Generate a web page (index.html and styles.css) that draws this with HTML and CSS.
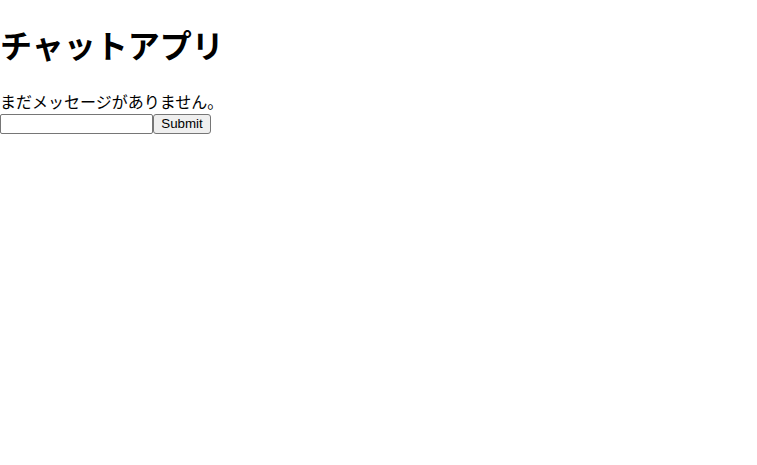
FILE: index.html
```html
<!DOCTYPE html>
<html lang="ja">
<head>
<meta charset="utf-8">
<title>チャットアプリ</title>
<link rel="stylesheet" href="styles.css">
</head>
<body>
<div class="app">
  <h1 class="title">チャットアプリ</h1>
  <div class="messages">まだメッセージがありません。</div>
  <form class="composer">
    <input class="composer-input" type="text"><button class="composer-submit" type="submit">Submit</button>
  </form>
</div>
</body>
</html>
```

FILE: styles.css
```css
html, body {
  margin: 0;
  padding: 0;
  background: #fff;
}
body {
  font-family: "Liberation Sans", "Noto Sans CJK JP", sans-serif;
  color: #000;
}
.title {
  font-size: 32px;
  font-weight: bold;
  margin: 21.44px 0;
}
.messages {
  font-size: 16px;
}
.composer {
  margin: 1px 0 0;
  display: flex;
}
.composer-input {
  box-sizing: border-box;
  width: 153px;
  height: 20px;
  font-family: "Liberation Sans", sans-serif;
  font-size: 13.33px;
  border: 1px solid #767676;
  border-radius: 2px;
  padding: 1px 2px;
}
.composer-submit {
  box-sizing: border-box;
  height: 20px;
  width: 58px;
  font-family: "Liberation Sans", sans-serif;
  font-size: 13.33px;
  background: #efefef;
  border: 1px solid #767676;
  border-radius: 3px;
  padding: 1px 6px;
}
```
